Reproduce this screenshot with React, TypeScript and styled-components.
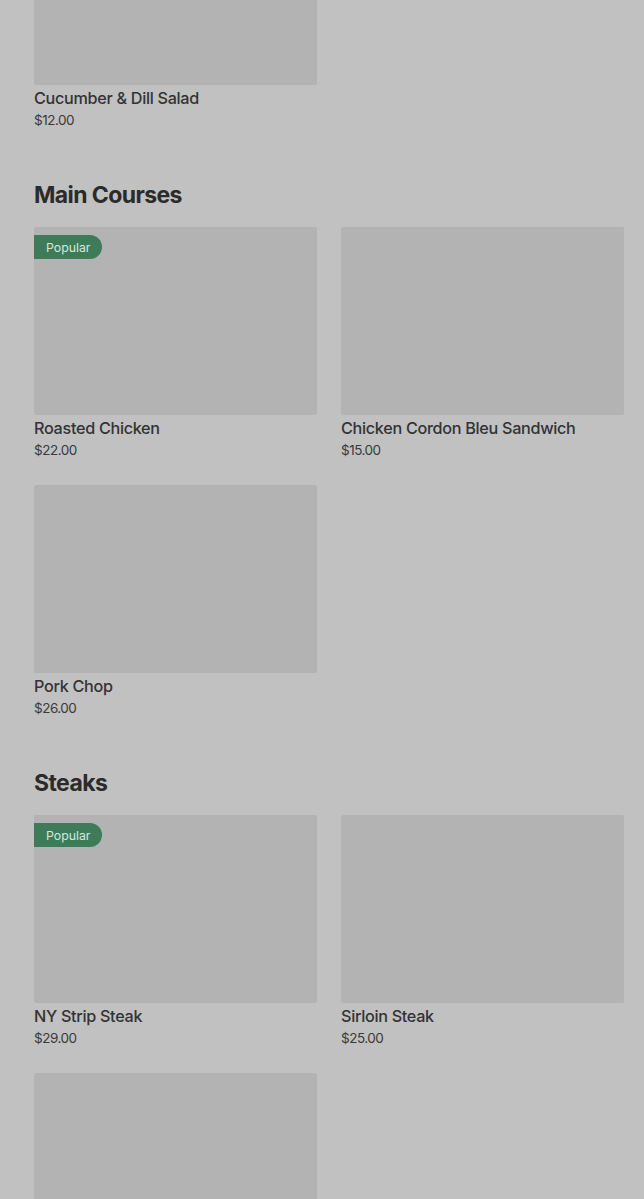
import React from 'react'
import styled, { createGlobalStyle } from 'styled-components'

type Item = {
  name: string
  price: string
  popular?: boolean
}

type Section = {
  title?: string
  items: Item[]
}

const sections: Section[] = [
  { items: [{ name: 'Cucumber & Dill Salad', price: '$12.00' }] },
  {
    title: 'Main Courses',
    items: [
      { name: 'Roasted Chicken', price: '$22.00', popular: true },
      { name: 'Chicken Cordon Bleu Sandwich', price: '$15.00' },
      { name: 'Pork Chop', price: '$26.00' },
    ],
  },
  {
    title: 'Steaks',
    items: [
      { name: 'NY Strip Steak', price: '$29.00', popular: true },
      { name: 'Sirloin Steak', price: '$25.00' },
      { name: 'Ribeye Steak', price: '$34.00' },
    ],
  },
]

const GlobalStyle = createGlobalStyle`
  html, body {
    margin: 0;
    padding: 0;
    background: #c1c1c1;
    overflow: hidden;
  }
  body {
    font-family: Inter, "Liberation Sans", sans-serif;
    color: #2f2f2f;
  }
`

const Page = styled.main`
  margin-top: -103px;
  padding: 0 20px 0 34px;
`

const SectionBlock = styled.section<{ $first?: boolean }>`
  padding-top: ${props => (props.$first ? '0' : '48px')};
`

const Heading = styled.h2`
  margin: 0 0 16px;
  font-size: 23px;
  line-height: 32px;
  font-weight: 700;
  letter-spacing: -0.6px;
  color: #2b2b2b;
`

const Grid = styled.div`
  display: grid;
  grid-template-columns: 283px 283px;
  column-gap: 24px;
  row-gap: 24px;
`

const Card = styled.article`
  display: flex;
  flex-direction: column;
`

const Photo = styled.div`
  position: relative;
  height: 188px;
  background: #b3b3b3;
  border-radius: 2px;
`

const Badge = styled.span`
  position: absolute;
  top: 8px;
  left: 0;
  height: 24px;
  display: flex;
  align-items: center;
  padding: 0 12px;
  background: #3d7b59;
  color: #d6e8dd;
  font-size: 12.3px;
  border-radius: 0 12px 12px 0;
`

const Name = styled.div`
  margin-top: 2px;
  font-size: 16.2px;
  line-height: 22px;
  font-weight: 500;
  letter-spacing: -0.3px;
  color: #333;
`

const Price = styled.div`
  padding-top: 1px;
  font-size: 13.5px;
  line-height: 21px;
  letter-spacing: -0.5px;
  color: #3a3a3a;
`

export default function App() {
  return (
    <>
      <GlobalStyle />
      <Page>
        {sections.map((section, i) => (
          <SectionBlock key={i} $first={i === 0}>
            {section.title && <Heading>{section.title}</Heading>}
            <Grid>
              {section.items.map(item => (
                <Card key={item.name}>
                  <Photo>{item.popular && <Badge>Popular</Badge>}</Photo>
                  <Name>{item.name}</Name>
                  <Price>{item.price}</Price>
                </Card>
              ))}
            </Grid>
          </SectionBlock>
        ))}
      </Page>
    </>
  )
}
